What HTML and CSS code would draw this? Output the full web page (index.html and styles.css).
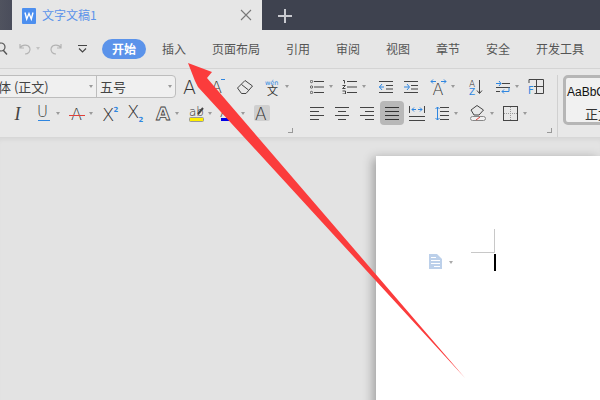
FILE: index.html
```html
<!DOCTYPE html>
<html lang="zh-CN">
<head>
<meta charset="utf-8">
<title>文字文稿1</title>
<link rel="stylesheet" href="styles.css">
</head>
<body>
<div class="app">
  <header class="tabbar">
    <div class="tab">
      <svg class="tab-logo" width="14" height="16" viewBox="0 0 14 16"><rect width="14" height="16" rx="1" fill="#4d8fef"/><path d="M3 4.5 4.7 11 7 5.5 9.3 11 11 4.5" fill="none" stroke="#fff" stroke-width="1.4"/></svg>
      <span class="tab-title">文字文稿1</span>
      <svg class="tab-close" width="10" height="10" viewBox="0 0 10 10"><path d="M0 0 10 10M10 0 0 10" stroke="#777" stroke-width="1.1"/></svg>
    </div>
    <svg class="tab-add" width="14" height="14" viewBox="0 0 14 14"><path d="M7 0V14M0 7H14" stroke="#c9cad0" stroke-width="2"/></svg>
  </header>

  <nav class="menubar">
    <svg class="qat-search" width="8" height="14" viewBox="0 0 8 14"><circle cx="1" cy="5" r="4" fill="none" stroke="#555" stroke-width="1.2"/><path d="M3 8 7 12.5" stroke="#555" stroke-width="1.4"/></svg>
    <svg class="m11" width="12" height="12" viewBox="0 0 12 12"><path d="M1 1V5H5M1 5C3 1.500 9 1 10.800 5 12 8.500 9 11 6 11" fill="none" stroke="#b3b3b3" stroke-width="1.2"/></svg>
    <i class="cr cr-light"></i>
    <svg class="m10" width="12" height="12" viewBox="0 0 12 12"><path d="M11 1V5H7M11 5C9 1.500 3 1 1.200 5 0 8.500 3 11 6 11" fill="none" stroke="#b3b3b3" stroke-width="1.2"/></svg>
    <svg class="m16" width="9" height="8" viewBox="0 0 9 8"><path d="M0 .5H9M1 3.500 4.500 7 8 3.500" fill="none" stroke="#444" stroke-width="1.1"/></svg>
    <span class="menu-active">开始</span>
    <ul class="menu">
      <li>插入</li><li>页面布局</li><li>引用</li><li>审阅</li><li>视图</li><li>章节</li><li>安全</li><li>开发工具</li>
    </ul>
  </nav>

  <section class="ribbon">
    <div class="group group-font">
      <div class="row row-top">
        <div class="combo">
          <div class="combo-font"><span>宋体 (正文)</span><i class="cr"></i></div>
          <div class="combo-size"><span>五号</span><i class="cr"></i></div>
        </div>
        <svg class="m8" width="13" height="15" viewBox="0 0 13 15"><text class="gt" x="-1" y="14.500" font-size="19">A</text></svg>
        <svg class="m16" width="12" height="15" viewBox="0 0 12 15"><text class="gt" x="-2" y="14" font-size="16">A</text><path d="M8 .5H12" stroke="#2f86e0"/></svg>
        <svg class="m12" width="16" height="14" viewBox="0 0 16 14"><path d="M.5 8 8 .5 15.500 6 9 13.500H4.500Z" fill="none" stroke="#444"/><path d="M4.500 4.500 11.500 10" stroke="#444"/></svg>
        <svg class="m12" width="15" height="16" viewBox="0 0 15 16"><text class="gp" x="0" y="5.500" font-size="6.500">wén</text><text class="gs" x="2" y="15.500" font-size="11">文</text></svg>
        <i class="cr"></i>
      </div>
      <div class="row row-bottom">
        <svg class="m15" width="8" height="15" viewBox="0 0 8 15"><text class="gi" x="-.5" y="14" font-size="18">I</text></svg>
        <svg class="m15" width="12" height="16" viewBox="0 0 12 16"><text class="gt" x="-1" y="12" font-size="15">U</text><rect y="15" width="12" height="1" fill="#2f86e0"/></svg>
        <i class="cr cr-6"></i>
        <svg class="m9" width="16" height="16" viewBox="0 0 16 16"><text class="gt" x="2" y="15" font-size="16">A</text><rect y="10" width="16" height="1" fill="#e0403a"/></svg>
        <i class="cr cr-4"></i>
        <svg class="m10" width="15" height="15" viewBox="0 0 15 15"><text class="gt" x="-1" y="15" font-size="18">X</text><text class="gb" x="10.500" y="6" font-size="7">2</text></svg>
        <svg class="m10" width="15" height="15" viewBox="0 0 15 15"><text class="gt" x="-1" y="12" font-size="18">X</text><text class="gb" x="10.500" y="15.500" font-size="7">2</text></svg>
        <svg class="m13" width="15" height="16" viewBox="0 0 15 16"><text class="go" x="0" y="15" font-size="18">A</text></svg>
        <i class="cr cr-4"></i>
        <svg class="m10" width="15" height="17" viewBox="0 0 15 17"><text class="gt" x="0" y="11" font-size="12">ab</text><path d="M9 9 14 3" stroke="#444" stroke-width="2"/><rect x=".5" y="12.500" width="14" height="4" rx="1" fill="#ffef00" stroke="#999"/></svg>
        <i class="cr cr-4"></i>
        <svg class="m8" width="13" height="16" viewBox="0 0 13 16"><text class="gt" x="0" y="12" font-size="14">A</text><rect x="1" y="13" width="12" height="3" fill="#0000e6"/></svg>
        <i class="cr cr-8"></i>
        <span class="char-shade m9"><svg width="16" height="16" viewBox="0 0 16 16"><text class="gt" x="1" y="14.500" font-size="17">A</text></svg></span>
      </div>
      <i class="launcher"></i>
    </div>

    <div class="group group-para">
      <div class="row row-top">
        <svg class="m10" width="14" height="14" viewBox="0 0 14 14"><use href="#ic-bullets"/></svg>
        <i class="cr"></i>
        <svg class="m9" width="15" height="14" viewBox="0 0 15 14"><use href="#ic-numbers"/></svg>
        <i class="cr"></i>
        <svg class="m13" width="14" height="12" viewBox="0 0 14 12"><path d="M0 .5H14M7 4.500H14M7 8H14M0 11.500H14" stroke="#444" fill="none"/><path d="M5 6H0M3 3 .5 6 3 9" stroke="#2f86e0" fill="none"/></svg>
        <svg class="m11" width="14" height="12" viewBox="0 0 14 12"><path d="M0 .5H14M7 4.500H14M7 8H14M0 11.500H14" stroke="#444" fill="none"/><path d="M0 6H5M3 3 5.500 6 3 9" stroke="#2f86e0" fill="none"/></svg>
        <svg class="m13" width="15" height="16" viewBox="0 0 15 16"><path d="M0 2.500H5M2 .5 0 2.500 2 4.500M15 2.500H10M13 .5 15 2.500 13 4.500" stroke="#2f86e0" fill="none"/><text class="gt" x="1.500" y="15.500" font-size="16">A</text></svg>
        <i class="cr"></i>
        <svg class="m14" width="13" height="16" viewBox="0 0 13 16"><text class="gt" x="0" y="7.500" font-size="9">A</text><text class="gb2" x="0" y="15.500" font-size="9">Z</text><path d="M10.500 1V14M8 11.500 10.500 14.500 13 11.500" stroke="#444" fill="none"/></svg>
        <svg class="m14" width="14" height="14" viewBox="0 0 14 14"><path d="M6 3.500H14M0 7.500H14M0 11.500H4" stroke="#444" fill="none"/><path d="M0 3.500H5M3 1 5 3.500 3 6M13 7.500V11.500H6M8 9.500 6 11.500 8 13.500" stroke="#2f86e0" fill="none"/></svg>
        <i class="cr"></i>
        <svg class="m9" width="16" height="15" viewBox="0 0 16 15"><path d="M1 4V.5H15.500V14.500H6.500M8.500 .5V14.500M6 7.500H15.500" fill="none" stroke="#444"/><text class="gb2" x="0" y="14.500" font-size="10">F</text></svg>
      </div>
      <div class="row row-bottom">
        <svg class="m10" width="14" height="13" viewBox="0 0 14 13"><path d="M0 .5H14M0 4.500H9M0 8.500H14M0 12.500H9" stroke="#444"/></svg>
        <svg class="m11" width="14" height="13" viewBox="0 0 14 13"><path d="M0 .5H14M3 4.500H11M0 8.500H14M3 12.500H11" stroke="#444"/></svg>
        <svg class="m11" width="14" height="13" viewBox="0 0 14 13"><path d="M0 .5H14M5 4.500H14M0 8.500H14M5 12.500H14" stroke="#444"/></svg>
        <span class="btn-on"><svg width="14" height="13" viewBox="0 0 14 13"><path d="M0 .5H14M0 4.500H14M0 8.500H14M0 12.500H14" stroke="#333"/></svg></span>
        <svg class="m5" width="16" height="15" viewBox="0 0 16 15"><path d="M.5 0V7M15.500 0V7" stroke="#444"/><path d="M3 3.500H7M5 1.500 3 3.500 5 5.500M13 3.500H9M11 1.500 13 3.500 11 5.500" stroke="#2f86e0" fill="none"/><path d="M0 10.500H16M0 14.500H16" stroke="#444"/></svg>
        <svg class="m10" width="14" height="15" viewBox="0 0 14 15"><path d="M5 1.500H14M5 5.500H14M5 9.500H14M5 13.500H14" stroke="#444"/><path d="M2.500 1V14M.5 3 2.500 1 4.500 3M.5 12 2.500 14 4.500 12" stroke="#2f86e0" fill="none"/></svg>
        <i class="cr"></i>
        <svg class="m12" width="16" height="16" viewBox="0 0 16 16"><path d="M1 5 7 .5 13.500 5 9 10H4Z" fill="none" stroke="#444"/><rect x=".5" y="11.500" width="15" height="4" rx="2" fill="#f0f0f0" stroke="#888"/><path d="M6 15 10 12" stroke="#e0403a"/></svg>
        <i class="cr cr-4"></i>
        <svg class="m9" width="15" height="15" viewBox="0 0 15 15"><rect x=".5" y=".5" width="14" height="14" fill="none" stroke="#444"/><path d="M7.500 1V14M1 7.500H14" stroke="#999" stroke-dasharray="1 1"/></svg>
        <i class="cr"></i>
      </div>
      <i class="launcher"></i>
    </div>

    <div class="styles">
      <div class="style-card">
        <span class="style-sample">AaBbCcDd</span>
        <span class="style-name">正文</span>
      </div>
    </div>
  </section>

  <main class="workspace">
    <div class="page">
      <svg class="doc-icon" width="13" height="15" viewBox="0 0 13 15"><path d="M0 0H8L13 5V15H0Z" fill="#bcd0ea"/><path d="M2 3.500H7M2 6.500H11M2 9.500H11M5 12.500H11" stroke="#fff"/></svg>
      <i class="cr cr-doc"></i>
      <div class="text-start">
        <div class="crop-mark"></div>
        <div class="text-caret"></div>
      </div>
    </div>
  </main>

  <svg class="annotation" width="600" height="400" viewBox="0 0 600 400"><polygon points="188,63 212,72 207,78 465,378 198,87 195,81" fill="#fb3c3c"/></svg>
</div>

<svg class="defs" width="0" height="0">
  <symbol id="ic-bullets" viewBox="0 0 14 14"><path d="M4 1.500H14M4 7H14M4 12.500H14" stroke="#444"/><circle cx="1.500" cy="1.500" r="1.200" fill="none" stroke="#444" stroke-width=".8"/><circle cx="1.500" cy="7" r="1.200" fill="none" stroke="#444" stroke-width=".8"/><circle cx="1.500" cy="12.500" r="1.200" fill="none" stroke="#444" stroke-width=".8"/></symbol>
  <symbol id="ic-numbers" viewBox="0 0 15 14"><path d="M5 1.500H15M5 7H15M5 12.500H15" stroke="#444"/><path d="M1 .5H2.500V3.500M.5 5.500H3.500L.5 8.500H3.500M.5 11H3.500V14H.5" stroke="#444" fill="none"/></symbol>
</svg>
</body>
</html>
```
FILE: styles.css
```css
* { box-sizing: border-box; }
html, body { margin: 0; padding: 0; }
body { width: 600px; height: 400px; overflow: hidden; font-family: "Noto Sans CJK SC", "Liberation Sans", sans-serif; }
i { display: block; flex: none; }
svg { display: block; flex: none; overflow: visible; }
ul { list-style: none; margin: 0; padding: 0; }

.app { position: relative; width: 600px; height: 400px; display: flex; flex-direction: column; background: #e3e3e3; overflow: hidden; }

.tabbar { flex: none; height: 30px; display: flex; align-items: center; background: linear-gradient(90deg, #50535f 0, #4a4d5b 12px, #3e424f 12px); padding-left: 12px; }
.tab { width: 250px; height: 30px; display: flex; align-items: center; background: #e6e6e6; padding-left: 10px; }
.tab-logo { margin-top: 1px; }
.tab-title { margin-left: 6px; font-size: 12px; line-height: 30px; color: #5b93ea; }
.tab-close { margin-left: auto; margin-right: 11px; }
.tab-add { margin-left: 16px; margin-top: 2px; }

.menubar { flex: none; height: 39px; display: flex; align-items: center; background: #e6e6e6; border-bottom: 1px solid #d4d4d4; padding-bottom: 1px; }
.qat-search { margin-left: 0; }
.menu-active { margin-left: 15px; width: 44px; height: 20px; border-radius: 10px; background: #5b93ea; color: #fff; font-size: 12px; font-weight: 700; line-height: 20px; text-align: center; }
.menu { display: flex; gap: 26px; margin-left: 16px; font-size: 12px; line-height: 20px; color: #555; white-space: nowrap; }

.ribbon { flex: none; height: 68px; display: flex; background: #e8e8e8; padding-top: 6px; }
.group { flex: none; position: relative; height: 62px; }
.group-font { width: 300px; }
.group-para { width: 258px; border-right: 1px solid #d0d0d0; }
.row { display: flex; align-items: center; }
.row-top { height: 23px; }
.row-bottom { height: 24px; margin-top: 3px; }

.combo { flex: none; width: 196px; height: 23px; margin-left: -20px; display: flex; background: #f0f0f0; border: 1px solid #bdbdbd; border-radius: 4px; font-size: 13px; line-height: 21px; color: #444; }
.combo-font { width: 116px; display: flex; align-items: center; justify-content: space-between; padding: 0 3px 0 4px; border-right: 1px solid #bdbdbd; white-space: nowrap; }
.combo-size { flex: 1; display: flex; align-items: center; justify-content: space-between; padding: 0 3px 0 3px; }

.cr { width: 0; height: 0; margin-left: 5px; border-left: 2.500px solid transparent; border-right: 2.500px solid transparent; border-top: 3px solid #9a9a9a; }
.cr-light { border-top-color: #c2c2c2; }
.cr-4 { margin-left: 4px; }
.cr-6 { margin-left: 6px; }
.cr-8 { margin-left: 8px; }
.cr-doc { margin-left: 7px; margin-top: 32px; border-top-color: #aaa; }

.m5 { margin-left: 5px; }
.m8 { margin-left: 8px; }
.m9 { margin-left: 9px; }
.m10 { margin-left: 10px; }
.m11 { margin-left: 11px; }
.m12 { margin-left: 12px; }
.m13 { margin-left: 13px; }
.m14 { margin-left: 14px; }
.m15 { margin-left: 15px; }
.m16 { margin-left: 16px; }

.gt, .gi, .go, .gb, .gb2, .gs, .gp { font-family: "DejaVu Sans", sans-serif; }
.gt { font-weight: 200; fill: #333; }
.gi { font-family: "Liberation Serif", serif; font-style: italic; fill: #444; }
.go { fill: none; stroke: #444; stroke-width: .8; font-weight: 700; }
.gb { fill: #2f86e0; font-weight: 700; }
.gb2 { fill: #2f86e0; }
.gp { fill: #2f86e0; }
.gs { font-family: "Noto Sans CJK SC", sans-serif; fill: #333; }

.char-shade { flex: none; width: 16px; height: 16px; background: #cfcfcf; border-radius: 2px; }
.btn-on { flex: none; width: 24px; height: 24px; margin-left: 6px; display: flex; align-items: center; justify-content: center; background: #b8b8b8; border-radius: 4px; }
.launcher { position: absolute; right: 7px; bottom: 4px; width: 5px; height: 5px; border-right: 1px solid #999; border-bottom: 1px solid #999; }
.group-para .launcher { right: 5px; }

.styles { flex: 1; padding-left: 5px; }
.style-card { width: 80px; height: 50px; display: flex; flex-direction: column; background: #f1f1f1; border: 3px solid #b6b6b6; border-radius: 5px; padding-left: 1px; overflow: hidden; white-space: nowrap; }
.style-sample { font-family: "Liberation Sans", sans-serif; font-size: 12px; line-height: 16px; margin-top: 6px; color: #111; }
.style-name { font-size: 13px; line-height: 16px; margin-top: 6px; margin-left: 18px; color: #333; }

.workspace { flex: 1; min-height: 0; padding: 19px 0 0 376px; background: #e3e3e3; box-shadow: inset 0 5px 5px -3px rgba(0, 0, 0, .07); }
.page { height: 400px; display: flex; align-items: flex-start; background: #fff; box-shadow: -3px 2px 10px rgba(0, 0, 0, .3); padding: 73px 0 0 53px; }
.doc-icon { margin-top: 25px; }
.text-start { margin-left: 18px; display: flex; flex-direction: column; align-items: flex-end; }
.crop-mark { width: 24px; height: 24px; border-right: 1px solid #c8c8c8; border-bottom: 1px solid #c8c8c8; }
.text-caret { width: 2px; height: 17px; margin-top: 1px; margin-right: -1px; background: #000; }

.annotation { position: absolute; left: 0; top: 0; pointer-events: none; }
.defs { position: absolute; }
```
